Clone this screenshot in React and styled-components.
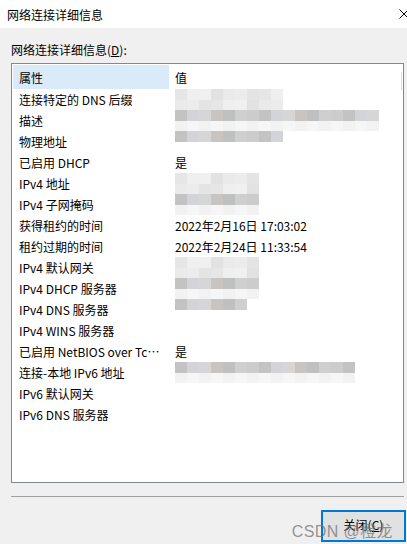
import React from 'react'
import styled, { createGlobalStyle } from 'styled-components'

const Global = createGlobalStyle`
    html, body { margin: 0; padding: 0; }
    body {
        width: 407px;
        height: 544px;
        overflow: hidden;
        background: #f0f0f0;
        font-family: "Noto Sans CJK SC", "Noto Sans", sans-serif;
        font-size: 12px;
        color: #000;
    }
`

// Styles
const Window = styled.div`
    width: 407px;
    height: 544px;
    display: flex;
    flex-direction: column;
    background: #f0f0f0;
    position: relative;
    overflow: hidden;
`
const TitleBar = styled.div`
    height: 28px;
    background: #fff;
    display: flex;
    align-items: center;
    justify-content: space-between;
    padding-left: 7px;
    font-size: 12px;
`
const CloseX = styled.svg`
    width: 10px;
    height: 10px;
    margin-right: -2px;
`
const Body = styled.div`
    flex: 1;
    display: flex;
    flex-direction: column;
    padding: 13px 0 0 11px;
`
const Label = styled.div`
    height: 22px;
    line-height: 18px;
    u { text-decoration: underline; }
`
const ListBox = styled.div`
    width: 393px;
    height: 420px;
    box-sizing: border-box;
    border: 1px solid #828790;
    background: #fff;
    padding: 1px;
    position: relative;
`
const ScrollHint = styled.div`
    position: absolute;
    right: 1px;
    top: 8px;
    width: 1px;
    height: 18px;
    background: #dcdcdc;
`
const Row = styled.div`
    display: grid;
    grid-template-columns: 156px 1fr;
    height: ${p => (p.$head ? 24 : 21)}px;
    align-items: center;
`
const NameCell = styled.div`
    height: 100%;
    display: flex;
    align-items: center;
    padding-left: 6px;
    padding-right: 4px;
    background: ${p => (p.$head ? '#d9ebf9' : 'transparent')};
    white-space: nowrap;
    overflow: hidden;
    span {
        overflow: hidden;
        text-overflow: ellipsis;
    }
`
const ValueCell = styled.div`
    height: 100%;
    display: flex;
    align-items: center;
    padding-left: 6px;
    white-space: nowrap;
`
const Mosaic = styled.div`
    display: grid;
    grid-template-columns: repeat(${p => p.$cols}, 12px);
    grid-auto-rows: 10.5px;
    height: 21px;
    align-self: stretch;
`
const Tile = styled.div`
    background: ${p => p.$c};
`
const Separator = styled.div`
    width: 393px;
    height: 1px;
    background: #a0a0a0;
    margin-top: 13px;
`
const Footer = styled.div`
    display: flex;
    justify-content: flex-end;
    margin-top: 13px;
`
const Button = styled.button`
    width: 85px;
    height: 32px;
    box-sizing: border-box;
    border: 2px solid #0078d7;
    background: #e1e1e1;
    font-family: inherit;
    font-size: 12px;
    color: #000;
    padding: 0 0 4px 0;
    margin-right: 1px;
    u { text-decoration: underline; }
`
const Watermark = styled.div`
    position: absolute;
    right: 14px;
    bottom: 2px;
    font-family: "Liberation Sans", "Noto Sans CJK SC", sans-serif;
    font-size: 16px;
    color: rgba(115, 115, 115, 0.75);
    letter-spacing: 0.4px;
    pointer-events: none;
`

const shades = {
    light: ['#e6e6e6', '#ececec', '#e2e2e2', '#efefef', '#e4e4e4', '#eaeaea', '#f0f0f0'],
    dark: ['#c3c3c3', '#cfcfcf', '#c8c4c2', '#d2d4d8', '#cccccc', '#bfc0c0', '#d6d6d6'],
    pale: ['#f4f4f4', '#f1f1f1', '#f6f6f6', '#f3f3f3', '#f7f7f7', '#f2f2f2'],
}

const MosaicBlock = ({ cols, top, bottom }) => {
    const tiles = []
    ;[top, bottom].forEach((tone, r) => {
        for (let i = 0; i < cols; i++) {
            const set = shades[tone] || ['transparent']
            const c = tone ? set[(i * 3 + r * 5) % set.length] : 'transparent'
            tiles.push(<Tile key={`${r}-${i}`} $c={c} />)
        }
    })
    return <Mosaic $cols={cols}>{tiles}</Mosaic>
}

const rows = [
    ['连接特定的 DNS 后缀', { cols: 9, top: 'light', bottom: 'light' }],
    ['描述', { cols: 17, top: 'dark', bottom: 'pale' }],
    ['物理地址', { cols: 9, top: 'dark', bottom: null }],
    ['已启用 DHCP', '是'],
    ['IPv4 地址', { cols: 7, top: 'light', bottom: 'light' }],
    ['IPv4 子网掩码', { cols: 7, top: 'dark', bottom: 'pale' }],
    ['获得租约的时间', '2022年2月16日 17:03:02'],
    ['租约过期的时间', '2022年2月24日 11:33:54'],
    ['IPv4 默认网关', { cols: 7, top: 'light', bottom: 'light' }],
    ['IPv4 DHCP 服务器', { cols: 7, top: 'dark', bottom: 'pale' }],
    ['IPv4 DNS 服务器', { cols: 6, top: 'dark', bottom: null }],
    ['IPv4 WINS 服务器', ''],
    ['已启用 NetBIOS over Tcpip', '是'],
    ['连接-本地 IPv6 地址', { cols: 15, top: 'dark', bottom: 'pale' }],
    ['IPv6 默认网关', ''],
    ['IPv6 DNS 服务器', ''],
]

const App = () => {
    return (
        <Window>
            <Global />
            <TitleBar>
                <span>网络连接详细信息</span>
                <CloseX viewBox="0 0 10 10">
                    <path d="M0.5 0.5 L9.5 9.5 M9.5 0.5 L0.5 9.5" stroke="#000" strokeWidth="1" fill="none" />
                </CloseX>
            </TitleBar>
            <Body>
                <Label>网络连接详细信息(<u>D</u>):</Label>
                <ListBox>
                    <ScrollHint />
                    <Row $head>
                        <NameCell $head><span>属性</span></NameCell>
                        <ValueCell>值</ValueCell>
                    </Row>
                    {rows.map(([name, value]) => (
                        <Row key={name}>
                            <NameCell><span>{name}</span></NameCell>
                            <ValueCell>
                                {typeof value === 'string' ? value : <MosaicBlock {...value} />}
                            </ValueCell>
                        </Row>
                    ))}
                </ListBox>
                <Separator />
                <Footer>
                    <Button>关闭(<u>C</u>)</Button>
                </Footer>
            </Body>
            <Watermark>CSDN @橙龙</Watermark>
        </Window>
    )
}

export default App
